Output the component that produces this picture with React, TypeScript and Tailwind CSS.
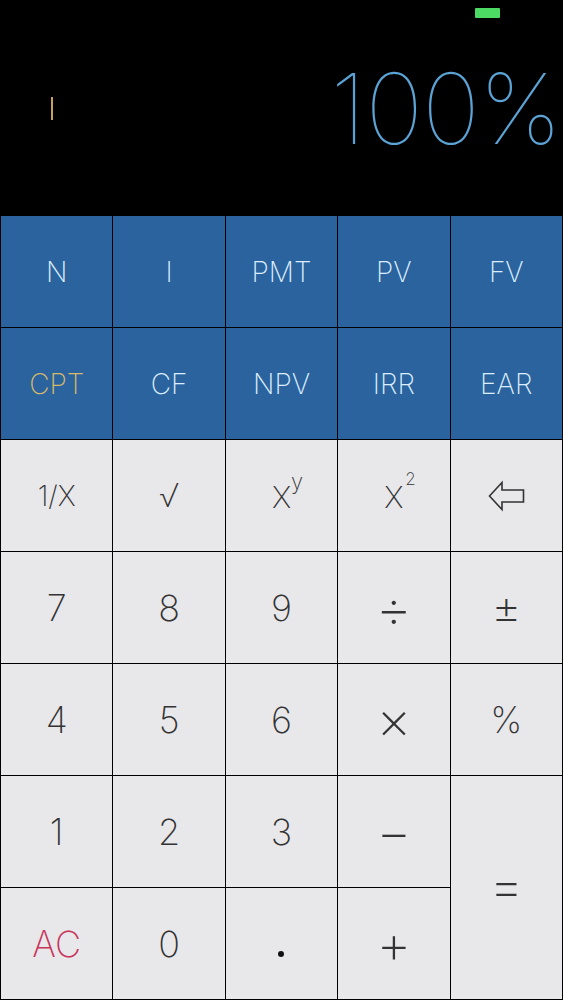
import React from "react";

const blueKeys = ["N", "I", "PMT", "PV", "FV", "CPT", "CF", "NPV", "IRR", "EAR"];

function Key({ children, className = "" }: { children: React.ReactNode; className?: string }) {
  return (
    <div className={"flex items-center justify-center " + className}>{children}</div>
  );
}

export default function App() {
  const font = { fontFamily: "Inter, 'Liberation Sans', sans-serif" };
  const g = "bg-[#e8e7ea] text-[#333] font-extralight";
  return (
    <div className="w-[563px] h-[1000px] bg-black overflow-hidden" style={font}>
      <div className="relative h-[215px]">
        <div className="absolute right-[63px] top-[8px] w-[25px] h-[10px] bg-[#4cd964] rounded-[1px]" />
        <div className="absolute left-[51px] top-[97px] w-[2px] h-[23px] bg-[#c9a064]" />
        <div className="absolute right-[2px] top-[60px] text-[98px] leading-none font-thin text-[#5aa3d4] tracking-[-1px]">
          100%
        </div>
      </div>
      <div className="grid grid-cols-5 grid-rows-[repeat(7,111px)] gap-px p-px bg-black">
        {blueKeys.map((k) => (
          <Key
            key={k}
            className={
              "bg-[#2a639d] text-[28px] font-extralight " +
              (k === "CPT" ? "text-[#d7b86c]" : "text-[#dcedfd]")
            }
          >
            {k}
          </Key>
        ))}
        <Key className={g + " text-[28px]"}>1/X</Key>
        <Key className={g + " text-[32px]"}>√</Key>
        <Key className={g + " text-[30px]"}>
          <span className="relative pt-[4px]">
            X<span className="absolute -top-[6px] left-[19px] text-[22px]">y</span>
          </span>
        </Key>
        <Key className={g + " text-[30px]"}>
          <span className="relative pt-[4px]">
            X<span className="absolute -top-[4px] left-[21px] text-[17px]">2</span>
          </span>
        </Key>
        <Key className="bg-[#e8e7ea]">
          <svg width="37" height="32" viewBox="0 0 37 32">
            <path
              d="M1.5 16 L14 2.5 L14 10 L35.5 10 L35.5 22 L14 22 L14 29.5 Z"
              fill="none"
              stroke="#333"
              strokeWidth="1.6"
              strokeLinejoin="miter"
            />
          </svg>
        </Key>
        <Key className={g + " text-[36px]"}>7</Key>
        <Key className={g + " text-[36px]"}>8</Key>
        <Key className={g + " text-[36px]"}>9</Key>
        <Key className={g + " text-[56px]"}>÷</Key>
        <Key className={g + " text-[46px]"}>±</Key>
        <Key className={g + " text-[36px]"}>4</Key>
        <Key className={g + " text-[36px]"}>5</Key>
        <Key className={g + " text-[36px]"}>6</Key>
        <Key className={g + " text-[54px]"}>×</Key>
        <Key className={g + " text-[36px]"}>%</Key>
        <Key className={g + " text-[36px]"}>1</Key>
        <Key className={g + " text-[36px]"}>2</Key>
        <Key className={g + " text-[36px]"}>3</Key>
        <Key className={g + " text-[54px]"}>−</Key>
        <Key className={g + " text-[54px] row-span-2"}>
          <span className="-mt-[4px]">=</span>
        </Key>
        <Key className="bg-[#e8e7ea] text-[#c8355a] text-[36px] font-extralight">AC</Key>
        <Key className={g + " text-[36px]"}>0</Key>
        <Key className="bg-[#e8e7ea]">
          <div className="mt-[20px] w-[6px] h-[6px] rounded-full bg-[#111]" />
        </Key>
        <Key className={g + " text-[54px]"}>+</Key>
      </div>
    </div>
  );
}
